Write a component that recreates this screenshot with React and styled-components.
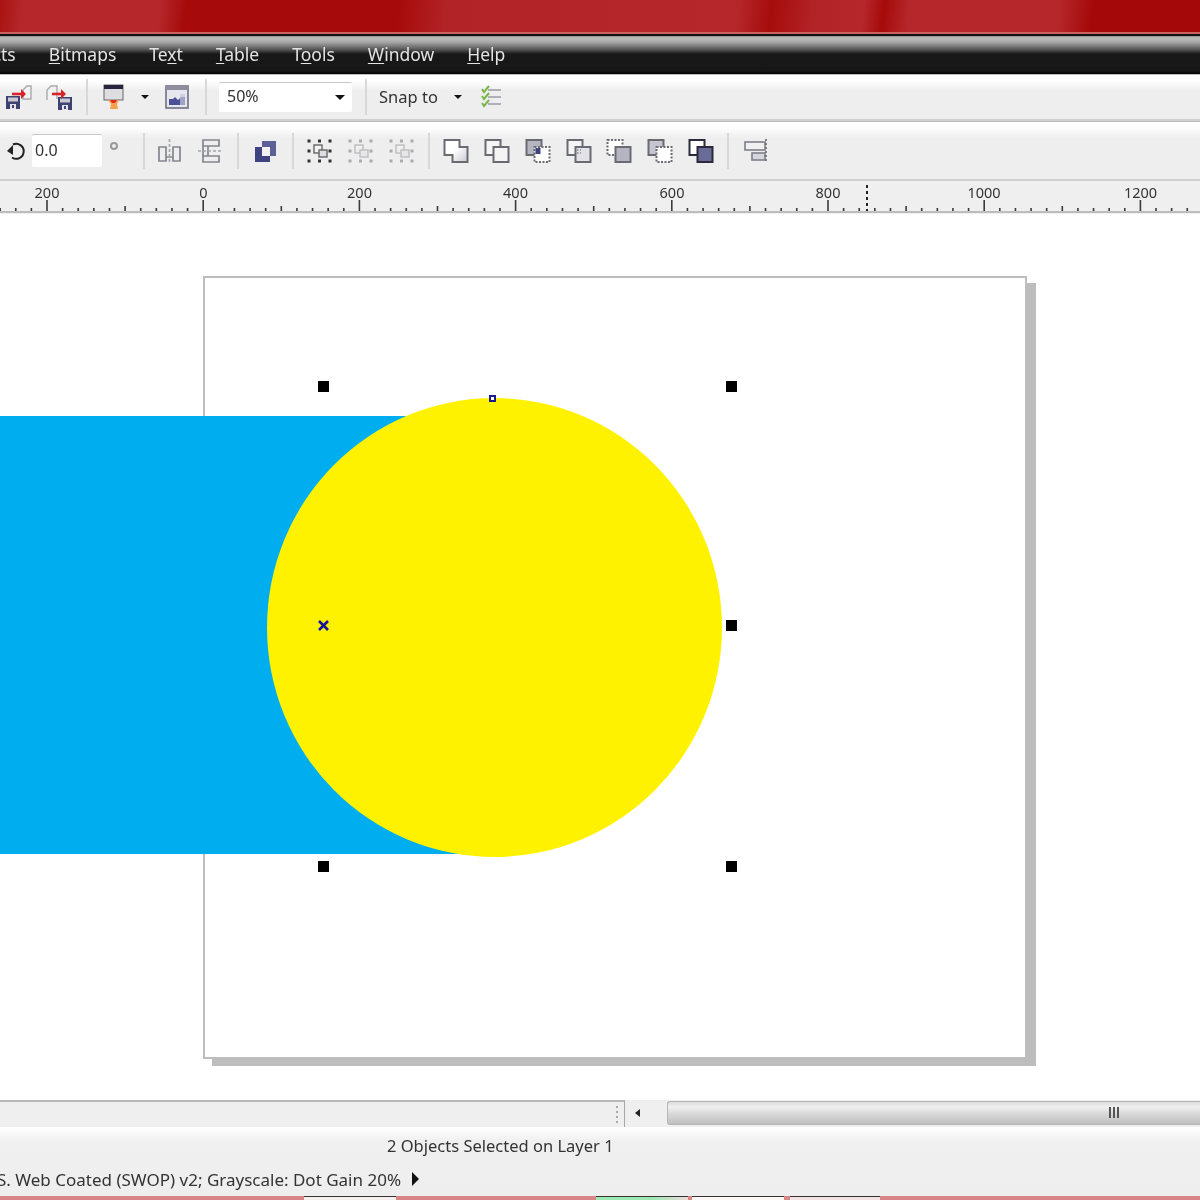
import React from 'react';
import styled, { createGlobalStyle } from 'styled-components';

const GlobalStyle = createGlobalStyle`
  html, body {
    margin: 0;
    padding: 0;
    background: #fff;
  }
  body {
    font-family: "Noto Sans", "Liberation Sans", sans-serif;
  }
`;

const Window = styled.div`
  width: 1200px;
  height: 1200px;
  overflow: hidden;
  display: flex;
  flex-direction: column;
`;

const TitleBar = styled.div`
  height: 36px;
  flex: none;
  box-sizing: border-box;
  border-bottom: 2px solid #111;
  box-shadow: inset 0 -2px 0 #c9625f;
  background: linear-gradient(
    96deg,
    #aa1212 0,
    #b5272b 24px,
    #b5272b 160px,
    #a60a0a 186px,
    #a60a0a 396px,
    #b22327 445px,
    #b5272b 735px,
    #a60c0c 768px,
    #b22327 810px,
    #b5272b 860px,
    #a60a0a 880px,
    #b5272b 905px,
    #b5272b 1055px,
    #a50808 1088px,
    #a50808 1200px
  );
`;

const MenuBar = styled.div`
  height: 38px;
  flex: none;
  box-sizing: border-box;
  display: flex;
  align-items: center;
  gap: 33px;
  padding-bottom: 3px;
  overflow: hidden;
  background: linear-gradient(#8f8f8f 0, #bdbdbd 2px, #a8a8a8 6px, #5c5c5c 13px, #181818 18px, #171717 35px, #000 38px);
`;

const MenuItem = styled.span`
  font-size: 17.5px;
  color: #e4e4e4;
  flex: none;
  filter: blur(0.35px);
  margin-left: ${({ $shift }) => $shift || 0}px;
`;

const Hot = styled.span`
  text-decoration: underline;
  text-underline-offset: 2px;
`;

const ToolRow = styled.div`
  height: ${({ $h }) => $h}px;
  flex: none;
  box-sizing: border-box;
  display: flex;
  align-items: center;
  padding-left: ${({ $pad }) => $pad}px;
  border-top: 1px solid #bdbdbd;
  border-bottom: 2px solid #cfcfcf;
  background: linear-gradient(#fff 0, #fefefe 6px, #eeeeee 16px, #eeeeee 100%);
`;

const Sep = styled.div`
  width: 2px;
  height: 36px;
  flex: none;
  background: #d8d8d8;
  margin: 0 ${({ $r }) => $r}px 0 ${({ $l }) => $l}px;
`;

const Tool = styled.svg`
  flex: none;
  width: ${({ $w }) => $w || 26}px;
  height: 26px;
  margin-right: ${({ $gap }) => $gap || 0}px;
  opacity: ${({ $faded }) => ($faded ? 0.35 : 1)};
  filter: blur(0.4px);
`;

const Caret = styled.span`
  flex: none;
  width: 0;
  height: 0;
  border-left: ${({ $s }) => $s || 4}px solid transparent;
  border-right: ${({ $s }) => $s || 4}px solid transparent;
  border-top: ${({ $s }) => $s || 4}px solid #111;
  margin: 0 ${({ $r }) => $r || 0}px 0 ${({ $l }) => $l || 0}px;
`;

const Combo = styled.div`
  width: 133px;
  height: 30px;
  flex: none;
  box-sizing: border-box;
  display: flex;
  align-items: center;
  justify-content: space-between;
  padding: 0 7px 0 8px;
  background: #fff;
  border-top: 1px solid #c8c8c8;
  border-radius: 2px;
  color: #333;
`;

const FieldText = styled.span`
  font-size: 16px;
  filter: blur(0.35px);
  margin-top: -3px;
`;

const Label = styled.span`
  flex: none;
  font-size: 16.5px;
  color: #333;
  filter: blur(0.35px);
  margin-top: -2px;
`;

const Field = styled.div`
  width: 70px;
  height: 33px;
  flex: none;
  box-sizing: border-box;
  display: flex;
  align-items: center;
  padding-left: 3px;
  margin-left: 6px;
  background: #fff;
  border-top: 1px solid #c8c8c8;
  border-radius: 2px;
  color: #333;
`;

const Degree = styled.span`
  flex: none;
  width: 8px;
  height: 8px;
  box-sizing: border-box;
  border: 2px solid #999;
  border-radius: 50%;
  margin: -10px 0 0 8px;
`;

const Ruler = styled.svg`
  display: block;
  width: 1200px;
  height: 33px;
  flex: none;
  background: #efefef;
`;

const RulerLabel = styled.text`
  font-family: "Noto Sans", "Liberation Sans", sans-serif;
  font-size: 14.5px;
  fill: #333;
  text-anchor: middle;
  filter: blur(0.35px);
`;

const Canvas = styled.div`
  position: relative;
  height: 886px;
  flex: none;
  background: #fff;
`;

const Page = styled.div`
  position: absolute;
  left: 203px;
  top: 62px;
  width: 824px;
  height: 783px;
  box-sizing: border-box;
  background: #fff;
  border: 2px solid #bdbdbd;
  box-shadow: 9px 7px 0 #bdbdbd;
`;

const BlueRect = styled.div`
  position: absolute;
  left: 0;
  top: 202px;
  width: 480px;
  height: 438px;
  background: #00aeef;
`;

const YellowCircle = styled.div`
  position: absolute;
  left: 267px;
  top: 184px;
  width: 455px;
  height: 459px;
  border-radius: 50%;
  background: #fff200;
`;

const Handle = styled.div`
  position: absolute;
  left: ${({ $x }) => $x - 5.5}px;
  top: ${({ $y }) => $y - 5.5}px;
  width: 11px;
  height: 11px;
  background: #000;
`;

const Node = styled.div`
  position: absolute;
  left: 489px;
  top: 181px;
  width: 7px;
  height: 7px;
  box-sizing: border-box;
  background: #fff;
  border: 2px solid #1b1b8f;
`;

const CenterMark = styled.svg`
  position: absolute;
  left: 317px;
  top: 405px;
  width: 13px;
  height: 13px;
`;

const ScrollRow = styled.div`
  height: 27px;
  flex: none;
  display: flex;
  background: #efefef;
`;

const ScrollLeft = styled.div`
  width: 625px;
  flex: none;
  box-sizing: border-box;
  display: flex;
  justify-content: flex-end;
  align-items: center;
  padding-right: 6px;
  border-top: 2px solid #b8b8b8;
  border-right: 1px solid #a8a8a8;
`;

const Grip = styled.span`
  width: 2px;
  height: 18px;
  background: repeating-linear-gradient(#aaa 0 2px, transparent 2px 5px);
`;

const ArrowCell = styled.div`
  width: 42px;
  flex: none;
  display: flex;
  align-items: center;
  padding: 0 0 2px 10px;
  box-sizing: border-box;
`;

const LeftArrow = styled.span`
  width: 0;
  height: 0;
  border-top: 4px solid transparent;
  border-bottom: 4px solid transparent;
  border-right: 5px solid #222;
`;

const Thumb = styled.div`
  flex: 1;
  height: 24px;
  margin-top: 1px;
  box-sizing: border-box;
  display: flex;
  align-items: center;
  padding-left: 441px;
  padding-bottom: 2px;
  border: 1px solid #b5b5b5;
  border-right: none;
  border-radius: 3px 0 0 3px;
  background: linear-gradient(#dcdcdc 0, #f0f0f0 5px, #d8d8d8 12px, #bdbdbd 23px);
`;

const ThumbGrip = styled.span`
  width: 10px;
  height: 11px;
  background: repeating-linear-gradient(90deg, #555 0 2px, transparent 2px 4px);
`;

const Status = styled.div`
  height: 69px;
  flex: none;
  box-sizing: border-box;
  display: flex;
  flex-direction: column;
  background: linear-gradient(#fff 0, #f0f0f0 14px, #eeeeee 100%);
  color: #333;
`;

const StatusCenter = styled.div`
  height: 37px;
  display: flex;
  align-items: center;
  padding-left: 387px;
  box-sizing: border-box;
  font-size: 16.5px;
`;

const StatusProfile = styled.div`
  height: 30px;
  display: flex;
  align-items: center;
  gap: 11px;
  margin-left: -3px;
  font-size: 17px;
`;

const StatusText = styled.span`
  filter: blur(0.35px);
  white-space: nowrap;
`;

const RightArrow = styled.span`
  width: 0;
  height: 0;
  border-top: 7px solid transparent;
  border-bottom: 7px solid transparent;
  border-left: 7px solid #111;
`;

const Taskbar = styled.div`
  height: 4px;
  flex: none;
  display: flex;
  background: #d88585;
`;

const TaskButton = styled.div`
  width: ${({ $w }) => $w}px;
  margin-left: ${({ $l }) => $l}px;
  flex: none;
  box-sizing: border-box;
  background: ${({ $bg }) => $bg};
  border-top: 1px solid #333;
`;

const Floppy = ({ x, y }) => (
  <g transform={`translate(${x} ${y})`}>
    <rect width="14" height="13" fill="#3d4273" />
    <rect x="2" y="1.5" width="10" height="4" fill="#c9c9d2" />
    <rect x="4" y="8" width="6" height="5" fill="#e4e4e8" />
    <rect x="6" y="9" width="2" height="3" fill="#3d4273" />
  </g>
);

const ImportIcon = () => (
  <Tool viewBox="0 0 27 26" $w={27} $gap={14}>
    <path d="M18 6l4-4h4v13h-8z" fill="#f2f2f2" stroke="#aaa" strokeWidth="1.4" />
    <Floppy x={1} y={12} />
    <path d="M7 10h12" stroke="#d8232b" strokeWidth="2.6" />
    <path d="M16 5l5 5-5 5z" fill="#d8232b" />
  </Tool>
);

const ExportIcon = () => (
  <Tool viewBox="0 0 27 26" $w={27} $gap={13}>
    <path d="M1 16V6l4-4h6v13" fill="#f2f2f2" stroke="#aaa" strokeWidth="1.4" />
    <Floppy x={12} y={13} />
    <path d="M6 10h12" stroke="#d8232b" strokeWidth="2.6" />
    <path d="M15 5l5 5-5 5z" fill="#d8232b" />
  </Tool>
);

const PublishIcon = () => (
  <Tool viewBox="0 0 24 26" $w={24}>
    <rect x="2" y="1" width="19" height="15" fill="#dedee2" stroke="#666" />
    <rect x="2" y="1" width="19" height="4" fill="#25253f" />
    <path d="M6 16h11l-2 4 1 5H8l1-5z" fill="#f5a04a" />
    <path d="M8 16h7l-2 3h-3z" fill="#e02d20" />
  </Tool>
);

const WelcomeIcon = () => (
  <Tool viewBox="0 0 24 26" $w={24}>
    <rect x="1" y="2" width="22" height="22" fill="#e6e6ee" stroke="#6f6f82" strokeWidth="1.6" />
    <rect x="1" y="2" width="22" height="4" fill="#8e8e9e" />
    <path d="M4 21v-6h4l2-2 3 3 3-3h4v8z" fill="#4c5096" />
    <path d="M15 10h5v11h-5z" fill="#c5c6d8" opacity="0.7" />
  </Tool>
);

const SnapListIcon = () => (
  <Tool viewBox="0 0 22 26" $w={22}>
    <path d="M8 6h13M8 13h13M8 20h13" stroke="#9a9aa5" strokeWidth="1.5" />
    <path d="M2 5l2 3 5-6M2 12l2 3 5-6M2 19l2 3 5-6" fill="none" stroke="#7ab648" strokeWidth="2" />
  </Tool>
);

const RotateIcon = () => (
  <Tool viewBox="0 0 20 26" $w={20}>
    <path d="M7 6.5a7.5 7.5 0 1 1-1 13" fill="none" stroke="#222" strokeWidth="2" />
    <path d="M1 13l6-6v10z" fill="#222" />
  </Tool>
);

const DistributeH = () => (
  <Tool viewBox="0 0 25 26" $w={25} $gap={16}>
    <path d="M2 9h7v14H2zM16 9h7v14h-7zM9 19h7" fill="#eee" stroke="#85858f" strokeWidth="1.7" />
    <path d="M12.5 1v25" stroke="#a5a5ae" strokeWidth="1.7" strokeDasharray="3 2" />
  </Tool>
);

const DistributeV = () => (
  <Tool viewBox="0 0 25 26" $w={25}>
    <path d="M5 2h16v6H5zM5 18h16v6H5zM5 8h5v10H5z" fill="#eee" stroke="#85858f" strokeWidth="1.7" />
    <path d="M0 13h25" stroke="#a5a5ae" strokeWidth="1.7" strokeDasharray="3 2" />
  </Tool>
);

const CombineIcon = () => (
  <Tool viewBox="0 0 24 26" $w={24}>
    <rect x="8" y="3" width="14" height="15" fill="#5c6096" />
    <rect x="1" y="9" width="15" height="15" fill="#3f4382" />
    <rect x="8" y="9" width="8" height="9" fill="#f2f2f2" />
  </Tool>
);

const groupDots = [
  [2, 3], [12.5, 3], [23, 3],
  [2, 13], [23, 13],
  [2, 23], [12.5, 23], [23, 23],
];

const GroupIcon = ({ faded, gap }) => (
  <Tool viewBox="0 0 25 26" $w={25} $gap={gap} $faded={faded}>
    {groupDots.map(([x, y]) => (
      <rect key={`${x}-${y}`} x={x - 1.5} y={y - 1.5} width="3" height="3" fill="#333" />
    ))}
    <rect x="7" y="7" width="8" height="8" fill="#f4f4f4" stroke="#666" strokeWidth="1.4" />
    <rect x="12" y="12" width="8" height="7" fill="#dcdce2" stroke="#666" strokeWidth="1.4" />
  </Tool>
);

const WeldIcon = () => (
  <Tool viewBox="0 0 26 26" $gap={15}>
    <defs>
      <linearGradient id="weld" x1="0" y1="0" x2="1" y2="1">
        <stop offset="0.45" stopColor="#fff" />
        <stop offset="1" stopColor="#c9c9d2" />
      </linearGradient>
    </defs>
    <path d="M1.5 2h15v7h8v15h-15v-7h-8z" fill="url(#weld)" stroke="#6a6a72" strokeWidth="2" />
  </Tool>
);

// two overlapping squares; each shaper button only differs in what is filled and dashed
const Shaper = ({ a, b, mid, dashA, dashB, dots, stroke = '#6a6a72', gap }) => (
  <Tool viewBox="0 0 26 26" $gap={gap}>
    <rect x="1.5" y="2" width="15" height="15" fill={a} stroke={stroke} strokeWidth="2" strokeDasharray={dashA ? '2 1.5' : undefined} />
    <rect x="9.5" y="9" width="15" height="15" fill={b} stroke={stroke} strokeWidth="2" strokeDasharray={dashB ? '2 1.5' : undefined} />
    {mid && <rect x="10.5" y="10" width="5" height="6" fill={mid} />}
    {dots && <path d="M11 12h4M11 15h4" stroke="#888" strokeWidth="1.4" strokeDasharray="1.5 1.5" />}
  </Tool>
);

const AlignIcon = () => (
  <Tool viewBox="0 0 24 26" $w={24}>
    <rect x="1" y="4" width="20" height="8" fill="#f0f0f0" stroke="#85858f" strokeWidth="1.7" />
    <rect x="8" y="15" width="13" height="7" fill="#d5d5de" stroke="#85858f" strokeWidth="1.7" />
    <path d="M22 1v24" stroke="#666" strokeWidth="1.6" strokeDasharray="2 2" />
  </Tool>
);

const buildTicks = () => {
  const ticks = [];
  const unit = 156.2 / 10;
  for (let i = -3; i < 80; i++) {
    const x = 47 + i * unit;
    const major = ((i % 10) + 10) % 10 === 0;
    const middle = ((i % 5) + 5) % 5 === 0;
    const top = major ? 19 : middle ? 25 : 27;
    ticks.push(<line key={i} x1={x} x2={x} y1={top} y2={30} stroke="#3a3a3a" strokeWidth={1.6} />);
  }
  return ticks;
};

const rulerLabels = [
  [47, '200'],
  [203.5, '0'],
  [359.5, '200'],
  [515.5, '400'],
  [672, '600'],
  [828, '800'],
  [984, '1000'],
  [1140.5, '1200'],
];

const App = () => (
  <Window>
    <GlobalStyle />
    <TitleBar />
    <MenuBar>
      <MenuItem $shift={-39}>Effects</MenuItem>
      <MenuItem><Hot>B</Hot>itmaps</MenuItem>
      <MenuItem>Te<Hot>x</Hot>t</MenuItem>
      <MenuItem><Hot>T</Hot>able</MenuItem>
      <MenuItem>T<Hot>o</Hot>ols</MenuItem>
      <MenuItem><Hot>W</Hot>indow</MenuItem>
      <MenuItem><Hot>H</Hot>elp</MenuItem>
    </MenuBar>
    <ToolRow $h={47} $pad={5}>
      <ImportIcon />
      <ExportIcon />
      <Sep $l={0} $r={14} />
      <PublishIcon />
      <Caret $l={15} $r={16} />
      <WelcomeIcon />
      <Sep $l={16} $r={12} />
      <Combo>
        <FieldText>50%</FieldText>
        <Caret $s={5} />
      </Combo>
      <Sep $l={13} $r={12} />
      <Label>Snap to</Label>
      <Caret $l={16} $r={18} />
      <SnapListIcon />
    </ToolRow>
    <ToolRow $h={60} $pad={6}>
      <RotateIcon />
      <Field><FieldText>0.0</FieldText></Field>
      <Degree />
      <Sep $l={25} $r={12} />
      <DistributeH />
      <DistributeV />
      <Sep $l={14} $r={15} />
      <CombineIcon />
      <Sep $l={14} $r={13} />
      <GroupIcon gap={16} />
      <GroupIcon faded gap={16} />
      <GroupIcon faded />
      <Sep $l={14} $r={13} />
      <WeldIcon />
      <Shaper a="#f4f4f4" b="#f4f4f4" gap={15} />
      <Shaper a="#b5b5c2" b="#fff" mid="#3f4382" dashB gap={15} />
      <Shaper a="#f4f4f4" b="#e2e2e8" dots gap={14} />
      <Shaper a="#fff" b="#b5b5c2" dashA gap={15} />
      <Shaper a="#c5c5cf" b="#fff" dashB gap={15} />
      <Shaper a="#fff" b="#6a6c98" stroke="#2a2a3a" />
      <Sep $l={13} $r={15} />
      <AlignIcon />
    </ToolRow>
    <Ruler viewBox="0 0 1200 33">
      {rulerLabels.map(([x, label]) => (
        <RulerLabel key={label + x} x={x} y={17}>{label}</RulerLabel>
      ))}
      {buildTicks()}
      <line x1={867} x2={867} y1={4} y2={30} stroke="#222" strokeWidth="2" strokeDasharray="3 3" />
      <line x1={0} x2={1200} y1={31} y2={31} stroke="#bdbdbd" strokeWidth="2" />
    </Ruler>
    <Canvas>
      <Page />
      <BlueRect />
      <YellowCircle />
      <Handle $x={323} $y={172} />
      <Handle $x={731} $y={172} />
      <Handle $x={731} $y={411} />
      <Handle $x={323} $y={652} />
      <Handle $x={731} $y={652} />
      <Node />
      <CenterMark viewBox="0 0 13 13">
        <path d="M2 2l9 9M11 2l-9 9" stroke="#15159a" strokeWidth="2.6" />
      </CenterMark>
    </Canvas>
    <ScrollRow>
      <ScrollLeft><Grip /></ScrollLeft>
      <ArrowCell><LeftArrow /></ArrowCell>
      <Thumb><ThumbGrip /></Thumb>
    </ScrollRow>
    <Status>
      <StatusCenter><StatusText>2 Objects Selected on Layer 1</StatusText></StatusCenter>
      <StatusProfile>
        <StatusText>S. Web Coated (SWOP) v2; Grayscale: Dot Gain 20%</StatusText>
        <RightArrow />
      </StatusProfile>
    </Status>
    <Taskbar>
      <TaskButton $l={304} $w={92} $bg="#f5eeee" />
      <TaskButton $l={200} $w={92} $bg="linear-gradient(90deg, #9be8b0 0 60%, #ecdcdc)" />
      <TaskButton $l={4} $w={92} $bg="#fbf8f8" />
      <TaskButton $l={6} $w={90} $bg="#f3e2e2" />
    </Taskbar>
  </Window>
);

export default App;
